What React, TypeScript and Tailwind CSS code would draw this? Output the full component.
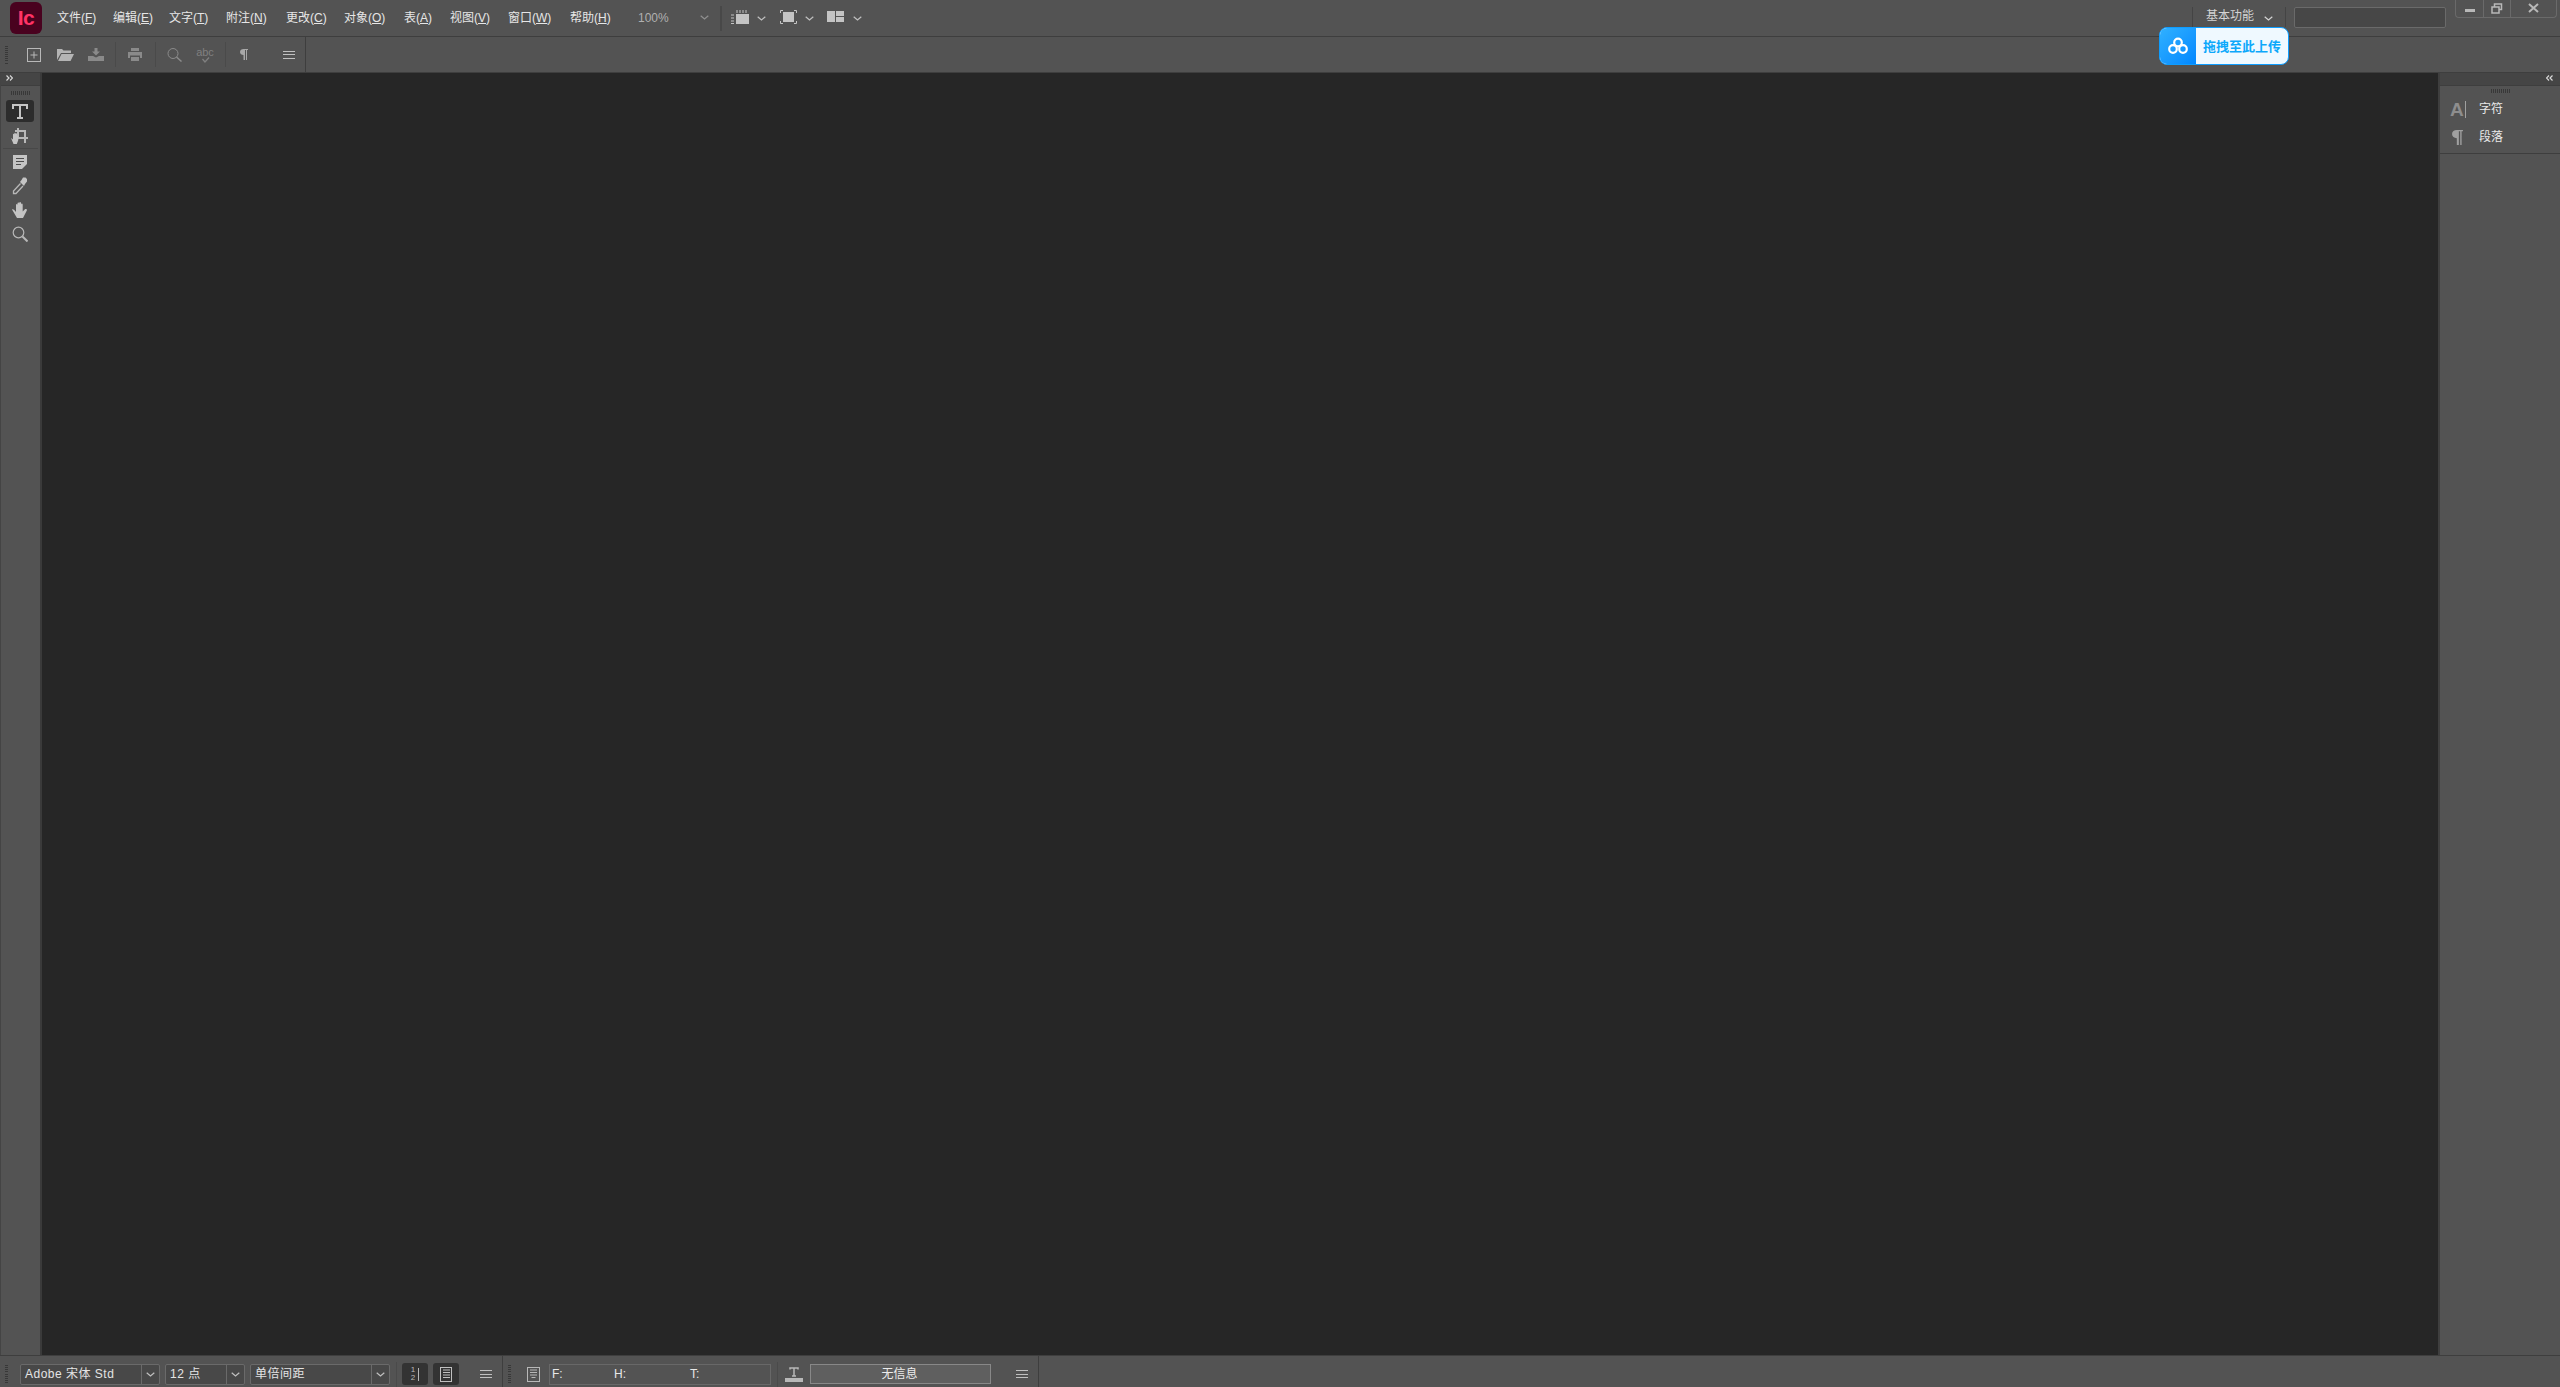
import type { ReactNode } from "react";

const menus = [
  { label: "文件", key: "F", w: "w-[56px]" },
  { label: "编辑", key: "E", w: "w-[56px]" },
  { label: "文字", key: "T", w: "w-[57px]" },
  { label: "附注", key: "N", w: "w-[60px]" },
  { label: "更改", key: "C", w: "w-[58px]" },
  { label: "对象", key: "O", w: "w-[60px]" },
  { label: "表", key: "A", w: "w-[46px]" },
  { label: "视图", key: "V", w: "w-[58px]" },
  { label: "窗口", key: "W", w: "w-[62px]" },
  { label: "帮助", key: "H", w: "w-[68px]" },
];

function Grip() {
  return (
    <div className="flex h-[18px] w-[3px] shrink-0 flex-col justify-between">
      {[0, 1, 2, 3, 4, 5, 6, 7, 8].map((i) => (
        <span key={i} className="h-px w-full bg-[#383838]" />
      ))}
    </div>
  );
}

function HGrip() {
  return (
    <div className="flex h-[4px] w-[19px] justify-between">
      {[0, 1, 2, 3, 4, 5, 6, 7, 8, 9].map((i) => (
        <span key={i} className="h-full w-px bg-[#383838]" />
      ))}
    </div>
  );
}

function Icon({ children, w = 18, h = 18, className = "" }: { children: ReactNode; w?: number; h?: number; className?: string }) {
  return (
    <svg width={w} height={h} viewBox={`0 0 ${w} ${h}`} className={`shrink-0 ${className}`} fill="none">
      {children}
    </svg>
  );
}

function Chevron({ className = "", color = "#c0c0c0" }: { className?: string; color?: string }) {
  return (
    <Icon w={9} h={5} className={className}>
      <path d="M.7.7 4.500 4 8.300.7" stroke={color} strokeWidth="1.200" />
    </Icon>
  );
}

function Arrows({ left = false }: { left?: boolean }) {
  return (
    <Icon w={7} h={6} className={`mb-[2px] ${left ? "rotate-180" : ""}`}>
      <path d="M.5.5 3 3 .5 5.500M4 .5 6.500 3 4 5.500" stroke="#d8d8d8" strokeWidth="1.200" />
    </Icon>
  );
}

function Pilcrow({ color = "#a8a8a8", w = 8, h = 11 }: { color?: string; w?: number; h?: number }) {
  return (
    <svg width={w} height={h} viewBox="0 0 8 11" className="shrink-0">
      <path d="M3.500 0H8v1H7v10H6V1H5v10H3.500V6C1.500 6 0 5 0 3s1.500-3 3.500-3z" fill={color} />
    </svg>
  );
}

function MenuLines({ className = "" }: { className?: string }) {
  return (
    <div className={`flex h-[8px] w-[12px] shrink-0 flex-col justify-between ${className}`}>
      <span className="h-px bg-[#c0c0c0]" />
      <span className="h-px bg-[#c0c0c0]" />
      <span className="h-px bg-[#c0c0c0]" />
    </div>
  );
}

function Sep({ className = "" }: { className?: string }) {
  return <span className={`h-[25px] w-px shrink-0 bg-[#4a4a4a] ${className}`} />;
}

function MenuBar() {
  return (
    <div className="flex h-[37px] shrink-0 items-center border-b border-[#3e3e3e]">
      <div className="ml-[10px] flex h-[32px] w-[32px] items-center justify-center rounded-[6px] bg-[#49021f] text-[21px] font-bold tracking-[-0.5px] text-[#ff3366]">
        Ic
      </div>
      <div className="ml-[15px] flex items-center">
        {menus.map((m) => (
          <span key={m.key} className={`${m.w} text-[12px] text-[#e6e6e6]`}>
            {m.label}(<span className="underline">{m.key}</span>)
          </span>
        ))}
      </div>
      <span className="w-[62px] text-[12px] text-[#b0b0b0]">100%</span>
      <Chevron className="mb-[2px]" color="#909090" />
      <span className="ml-[11px] h-[25px] w-[2px] bg-[#484848]" />
      <Icon w={18} h={14} className="mb-[2px] ml-[9px]">
        <path d="M5 4h13v10H5z" fill="#c4c4c4" />
        <path d="M6 0v3M9 0v3M12 0v3M15 0v3M0 5h3M0 8h3M0 11h3M0 13.500h3" stroke="#c4c4c4" />
      </Icon>
      <Chevron className="ml-[8px]" />
      <Icon w={17} h={14} className="mb-[2px] ml-[14px]">
        <rect x="3" y="2" width="11" height="10" fill="#c4c4c4" />
        <path d="M.5 3V.5H3M14 .5h2.500V3M.5 11v2.500H3M14 13.500h2.500V11" stroke="#c4c4c4" />
      </Icon>
      <Chevron className="ml-[8px]" />
      <Icon w={17} h={11} className="mb-[3px] ml-[13px]">
        <path d="M0 0h8v11H0zM9 0h8v5H9zM9 6h8v5H9z" fill="#c4c4c4" />
      </Icon>
      <Chevron className="ml-[9px]" />
      <div className="flex-1" />
      <span className="mb-[3px] h-[20px] w-px bg-[#444]" />
      <span className="mb-[4px] ml-[13px] text-[12px] text-[#d4d4d4]">基本功能</span>
      <Chevron className="ml-[10px]" color="#d4d4d4" />
      <span className="mb-[3px] ml-[12px] h-[20px] w-px bg-[#444]" />
      <div className="mb-[1px] ml-[8px] h-[21px] w-[152px] rounded-[2px] border border-[#6a6a6a] bg-[#474747]" />
      <div className="mb-[18px] ml-[9px] flex h-[18px] w-[102px] rounded-b-[4px] border border-t-0 border-[#6a6a6a]">
        <div className="flex w-[28px] items-center justify-center border-r border-[#6a6a6a]">
          <span className="mt-[3px] h-[3px] w-[10px] bg-[#b8b8b8]" />
        </div>
        <div className="flex w-[27px] items-center justify-center border-r border-[#6a6a6a]">
          <Icon w={12} h={12}>
            <path d="M3.500 3.500V1h7v5.500H8M1 4h7v6H1z" stroke="#b8b8b8" strokeWidth="1.500" />
          </Icon>
        </div>
        <div className="flex flex-1 items-center justify-center">
          <Icon w={11} h={11}>
            <path d="M1 1l9 8M10 1 1 9" stroke="#b8b8b8" strokeWidth="2" />
          </Icon>
        </div>
      </div>
      <span className="w-[3px]" />
    </div>
  );
}

function TopToolbar() {
  return (
    <div className="flex h-[35px] shrink-0 items-center">
      <div className="flex h-full w-[306px] items-center border-r border-[#3e3e3e] pl-[5px]">
        <Grip />
        <Icon w={14} h={14} className="ml-[19px]">
          <rect x="0.500" y="0.500" width="13" height="13" stroke="#b8b8b8" />
          <path d="M7 3.500v7M3.500 7h7" stroke="#b8b8b8" />
        </Icon>
        <Icon w={17} h={13} className="ml-[16px]">
          <path d="M0 1h5l1.500 1.500H14V5H4L0 12zM1 13l3.500-7H17l-3.500 7z" fill="#b4b4b4" />
        </Icon>
        <Icon w={16} h={13} className="ml-[14px] opacity-60">
          <path d="M6.500 0h3v3.500H12L8 7.500 4 3.500h2.500zM0 8h5l3 1.500L11 8h5v5H0z" fill="#b0b0b0" />
        </Icon>
        <Sep className="ml-[11px]" />
        <Icon w={14} h={13} className="ml-[12px] opacity-60">
          <path d="M3 0h8v3H3zM0 4h14v6h-2V7.500H2V10H0zM3 9h8v4H3z" fill="#b0b0b0" />
        </Icon>
        <Sep className="ml-[13px]" />
        <Icon w={15} h={14} className="ml-[11px] opacity-60">
          <circle cx="6" cy="5.500" r="5" stroke="#b0b0b0" />
          <path d="M9.500 9 14.500 13.500" stroke="#b0b0b0" strokeWidth="1.500" />
        </Icon>
        <div className="ml-[15px] flex w-[16px] flex-col items-center text-[11px] leading-[10px] text-[#808080]">
          abc
          <Icon w={9} h={6}>
            <path d="M1.500 2l2.500 3L8 .5" stroke="#808080" strokeWidth="1.300" />
          </Icon>
        </div>
        <Sep className="ml-[12px]" />
        <span className="ml-[14px]">
          <Pilcrow />
        </span>
        <MenuLines className="ml-[35px]" />
      </div>
    </div>
  );
}

function UploadBadge() {
  return (
    <div className="absolute left-[2159px] top-[27px] flex h-[38px] w-[130px] overflow-hidden rounded-[8px] border border-[#0d9dff] bg-[#eff9ff]">
      <div className="flex w-[36px] items-center justify-center bg-gradient-to-br from-[#2fb0ff] to-[#0087ff]">
        <Icon w={22} h={22}>
          <circle cx="11" cy="7.500" r="3.800" stroke="#fff" strokeWidth="2.200" />
          <circle cx="6" cy="14" r="3.800" stroke="#fff" strokeWidth="2.200" />
          <circle cx="16" cy="14" r="3.800" stroke="#fff" strokeWidth="2.200" />
        </Icon>
      </div>
      <span className="ml-[7px] self-center text-[13px] font-bold leading-none text-[#0ca8fb]">拖拽至此上传</span>
    </div>
  );
}

function LeftTools() {
  return (
    <div className="flex w-[42px] shrink-0 flex-col border-l border-r-2 border-l-[#444] border-r-[#3a3a3a]">
      <div className="flex h-[12px] items-center bg-[#454545] pl-[5px]">
        <Arrows />
      </div>
      <div className="flex h-[15px] items-center justify-center border-t border-[#3e3e3e]">
        <HGrip />
      </div>
      <div className="ml-[5px] mr-[6px] flex h-[22px] items-center justify-center rounded-[3px] bg-[#2c2c2c]">
        <Icon w={16} h={15}>
          <path d="M1 5V1h14v4M8 1v13M5 14h6" stroke="#c4c4c4" strokeWidth="2" />
        </Icon>
      </div>
      <div className="mt-[5px] flex h-[17px] justify-center pr-[1px]">
        <Icon w={18} h={17}>
          <path d="M7 1v10h10M4 4h10v12" stroke="#b8b8b8" strokeWidth="2" />
          <path d="M0 11l2 1.500V7.500c0-1 1.300-1 1.300 0V10V6.500c0-1 1.400-1 1.400 0V10V7c0-1 1.300-1 1.300 0v3 -1c0-1 1.300-1 1.300 0v4l-1.500 4H2.500z" fill="#c4c4c4" />
        </Icon>
      </div>
      <span className="mx-[2px] mt-[4px] h-px bg-[#484848]" />
      <div className="mt-[6px] flex h-[14px] justify-center pr-[1px]">
        <Icon w={14} h={14}>
          <path d="M0 0h14v9l-5 5H0z" fill="#c4c4c4" />
          <path d="M3 3.500h8M3 6.500h8M3 9.500h5" stroke="#4c4c4c" />
        </Icon>
      </div>
      <div className="mt-[8px] flex h-[18px] justify-center pr-[1px]">
        <Icon w={16} h={18}>
          <path d="M8.500 6.500 1.500 14v2.500h2.500l7-7.500" stroke="#b8b8b8" strokeWidth="1.300" />
          <path d="M8 5l4 4 1-2 2-2.500V2L13.500.5H11L9.500 3z" fill="#c4c4c4" />
        </Icon>
      </div>
      <div className="mt-[7px] flex h-[16px] justify-center pr-[1px]">
        <Icon w={16} h={16}>
          <path d="M0 7.500c1-.5 2 0 4 2.500V3c0-1.200 1.500-1.200 1.500 0v3V1.500C5.500.300 7.200.300 7.200 1.500V6V1c0-1.200 1.800-1.200 1.800 0v5V2.500c0-1.200 1.700-1.200 1.700 0V9.500l2-2c1-1 3 0 2 1.200L11 16H5z" fill="#c4c4c4" />
        </Icon>
      </div>
      <div className="mt-[8px] flex h-[16px] justify-center pr-[1px]">
        <Icon w={16} h={16}>
          <circle cx="6.500" cy="6.500" r="5.300" stroke="#b8b8b8" strokeWidth="1.200" />
          <path d="M10.500 10.500 15.500 15.500" stroke="#b8b8b8" strokeWidth="2" />
        </Icon>
      </div>
    </div>
  );
}

function RightPanel() {
  return (
    <div className="flex w-[122px] shrink-0 flex-col border-l-2 border-[#3e3e3e]">
      <div className="flex h-[12px] items-center justify-end bg-[#454545] pr-[7px]">
        <Arrows left />
      </div>
      <div className="flex h-[69px] flex-col border-y border-[#3e3e3e]">
        <div className="flex h-[9px] items-center justify-center">
          <HGrip />
        </div>
        <div className="flex h-[28px] items-center pl-[10px]">
          <div className="flex w-[29px] items-center">
            <span className="text-[19px] font-bold leading-none text-[#8e8e8e]">A</span>
            <span className="ml-px h-[17px] w-px bg-[#a0a0a0]" />
          </div>
          <span className="text-[12px] text-[#e8e8e8]">字符</span>
        </div>
        <div className="flex h-[28px] items-center pl-[12px]">
          <span className="w-[27px]">
            <Pilcrow color="#a0a0a0" w={11} h={15} />
          </span>
          <span className="text-[12px] text-[#e8e8e8]">段落</span>
        </div>
      </div>
    </div>
  );
}

function SelectBox({ w, label }: { w: string; label: string }) {
  return (
    <div className={`flex h-[21px] ${w} items-center rounded-[2px] border border-[#6a6a6a] bg-[#484848]`}>
      <span className="ml-[4px] flex-1 text-[12px] leading-none tracking-[0.5px] text-[#e4e4e4]">{label}</span>
      <div className="flex h-full w-[18px] items-center justify-center border-l border-[#6a6a6a]">
        <Chevron />
      </div>
    </div>
  );
}

function BottomBar() {
  return (
    <div className="flex h-[32px] shrink-0 items-center border-t border-[#3e3e3e]">
      <div className="flex h-full w-[503px] items-center border-r border-[#3e3e3e] pl-[5px] pt-[5px]">
        <Grip />
        <div className="ml-[12px] flex items-center gap-[5px]">
          <SelectBox w="w-[140px]" label="Adobe 宋体 Std" />
          <SelectBox w="w-[80px]" label="12 点" />
          <SelectBox w="w-[140px]" label="单倍间距" />
        </div>
        <Sep className="ml-[6px]" />
        <div className="ml-[5px] flex h-[22px] w-[26px] items-center justify-center rounded-[3px] bg-[#333]">
          <span className="flex flex-col text-[8px] leading-[8px] text-[#b8b8b8]">
            <span>1</span>
            <span>2</span>
          </span>
          <span className="ml-[3px] h-[13px] w-px bg-[#b8b8b8]" />
        </div>
        <div className="ml-[5px] flex h-[22px] w-[26px] items-center justify-center rounded-[3px] bg-[#333]">
          <Icon w={12} h={15}>
            <rect x="0.500" y="0.500" width="11" height="14" stroke="#c0c0c0" />
            <path d="M3 3h7M3 5.500h7M3 8h7M3 10.500h7" stroke="#c0c0c0" />
          </Icon>
        </div>
        <MenuLines className="ml-[21px]" />
      </div>
      <div className="flex h-full w-[536px] items-center border-r border-[#3e3e3e] pl-[5px] pt-[5px]">
        <Grip />
        <Icon w={13} h={15} className="ml-[16px]">
          <rect x="0.500" y="0.500" width="12" height="14" stroke="#b8b8b8" />
          <path d="M3 3h7M3 5.500h7M3 8h7M4.500 10.500h4" stroke="#b8b8b8" />
        </Icon>
        <div className="ml-[9px] flex h-[21px] w-[222px] items-center border border-[#686868] text-[12px] leading-none text-[#e8e8e8]">
          <span className="ml-[2px] w-[62px]">F:</span>
          <span className="w-[76px]">H:</span>
          <span>T:</span>
        </div>
        <Sep className="ml-[6px]" />
        <Icon w={18} h={15} className="ml-[7px]">
          <path d="M5 2.500V1h8v1.500M9 1v8M7 9h4" stroke="#b8b8b8" strokeWidth="1.500" />
          <path d="M0 11h18v4H0z" fill="#b8b8b8" />
        </Icon>
        <div className="ml-[7px] flex h-[20px] w-[181px] items-center justify-center border border-[#888] bg-[#5f5f5f] pr-[2px] text-[12px] leading-none text-[#ececec]">
          无信息
        </div>
        <MenuLines className="ml-[25px]" />
      </div>
    </div>
  );
}

export default function App() {
  return (
    <div className="relative flex h-[1387px] w-[2560px] flex-col overflow-hidden bg-[#535353] font-['Liberation_Sans','Noto_Sans_CJK_SC',sans-serif]">
      <MenuBar />
      <TopToolbar />
      <div className="flex min-h-0 flex-1 border-t border-[#3e3e3e]">
        <LeftTools />
        <div className="flex-1 bg-[#262626]" />
        <RightPanel />
      </div>
      <BottomBar />
      <UploadBadge />
    </div>
  );
}
